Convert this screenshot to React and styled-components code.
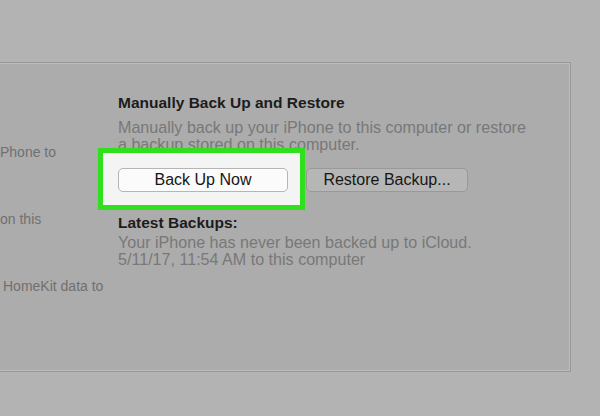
import React from "react";
import styled, { createGlobalStyle } from "styled-components";

const GlobalStyle = createGlobalStyle`
  html, body {
    margin: 0;
    padding: 0;
    width: 600px;
    height: 416px;
    overflow: hidden;
    background: #b3b3b3;
    font-family: "Liberation Sans", Arial, Helvetica, sans-serif;
  }
`;

const Page = styled.div`
  width: 600px;
  height: 416px;
  padding-top: 62px;
  box-sizing: border-box;
`;

const Panel = styled.section`
  width: 571px;
  height: 310px;
  box-sizing: border-box;
  background: #acacac;
  border-top: 1px solid #979797;
  border-right: 1px solid #979797;
  border-bottom: 1px solid #979797;
  box-shadow: inset -1px 1px 0 #bcbcbc, inset 0 -1px 0 #bcbcbc;
  display: flex;
`;

const LeftCol = styled.div`
  width: 118px;
  flex: none;
  padding-top: 80px;
  color: #707070;
  font-size: 14px;
`;

const SideLine = styled.div`
  white-space: nowrap;
  height: ${(p) => p.h}px;
  line-height: 18px;
  text-indent: ${(p) => p.indent}px;
`;

const RightCol = styled.div`
  position: relative;
  padding-top: 31px;
`;

const Heading = styled.div`
  font-weight: bold;
  font-size: 15.5px;
  line-height: 18px;
  color: #1c1c1c;
  margin-top: ${(p) => p.top || 0}px;
`;

const Desc = styled.div`
  color: #787878;
  font-size: 16.1px;
  line-height: 17px;
  white-space: nowrap;
  margin-top: ${(p) => p.top}px;
`;

const ButtonRow = styled.div`
  display: flex;
  gap: 18px;
  margin-top: 15.5px;
`;

const Highlight = styled.div`
  position: absolute;
  left: -20px;
  top: 85px;
  width: 197px;
  height: 52px;
  background: #f4f4f4;
  border: 5px solid #30e01c;
  z-index: 1;
`;

const Button = styled.button`
  position: relative;
  z-index: 2;
  width: ${(p) => p.w}px;
  height: 24px;
  border-radius: 5px;
  font-family: inherit;
  font-size: 16px;
  color: #161616;
  padding: 0;
  background: ${(p) => (p.primary ? "#fbfbfb" : "#b6b6b6")};
  border: 1px solid ${(p) => (p.primary ? "#b5b5b5" : "#999999")};
`;

export default function App() {
  return (
    <Page>
      <GlobalStyle />
      <Panel>
        <LeftCol>
          <SideLine h={67} indent={0}>Phone to</SideLine>
          <SideLine h={67} indent={0}>on this</SideLine>
          <SideLine h={18} indent={3}>HomeKit data to</SideLine>
        </LeftCol>
        <RightCol>
          <Heading>Manually Back Up and Restore</Heading>
          <Desc top={6.5}>
            Manually back up your iPhone to this computer or restore
            <br />a backup stored on this computer.
          </Desc>
          <Highlight />
          <ButtonRow>
            <Button primary w={170}>Back Up Now</Button>
            <Button w={162}>Restore Backup...</Button>
          </ButtonRow>
          <Heading top={22}>Latest Backups:</Heading>
          <Desc top={1.5}>
            Your iPhone has never been backed up to iCloud.
            <br />
            5/11/17, 11:54 AM to this computer
          </Desc>
        </RightCol>
      </Panel>
    </Page>
  );
}
